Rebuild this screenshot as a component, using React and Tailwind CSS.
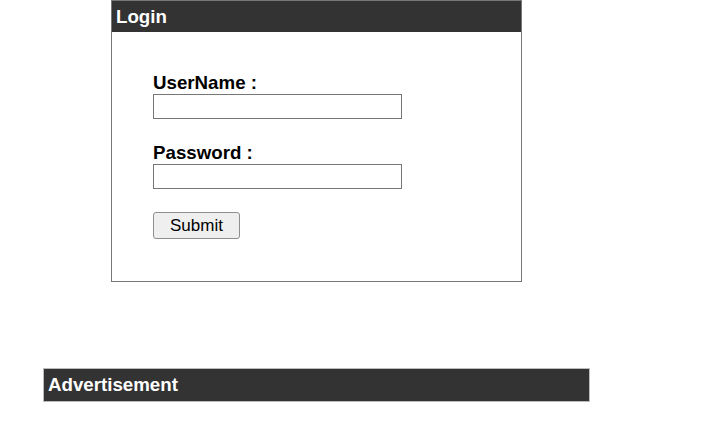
export default function App() {
  return (
    <div className="min-h-[445px] bg-white font-['Liberation_Sans',Arial,sans-serif] text-black">
      <div className="ml-[111px]">
        <div className="w-[411px] border border-[#777]">
          <div className="h-[31px] bg-[#333] px-[4px] pt-[5px] text-[18.72px] font-bold leading-[21px] text-white">
            Login
          </div>
          <form className="px-[41px] pt-[40px] pb-[42px]" onSubmit={(e) => e.preventDefault()}>
            <label className="block text-[18.72px] font-bold leading-[22px]">UserName :</label>
            <input
              type="text"
              className="block h-[25px] w-[249px] border border-[#767676] bg-white px-1 outline-none"
            />
            <label className="mt-[23px] block text-[18.72px] font-bold leading-[22px]">Password :</label>
            <input
              type="password"
              className="block h-[25px] w-[249px] border border-[#767676] bg-white px-1 outline-none"
            />
            <button
              type="submit"
              className="mt-[23px] block h-[27px] w-[87px] rounded-[3px] border border-[#8f8f8f] bg-[#efefef] text-[17px] leading-[20px] text-black"
            >
              Submit
            </button>
          </form>
        </div>
      </div>
      <div className="ml-[43px] mt-[86px] h-[34px] w-[547px] border border-[#bbb] bg-[#333] px-[4px] pt-[5px] text-[18.72px] font-bold leading-[21px] text-white">
        Advertisement
      </div>
    </div>
  );
}
